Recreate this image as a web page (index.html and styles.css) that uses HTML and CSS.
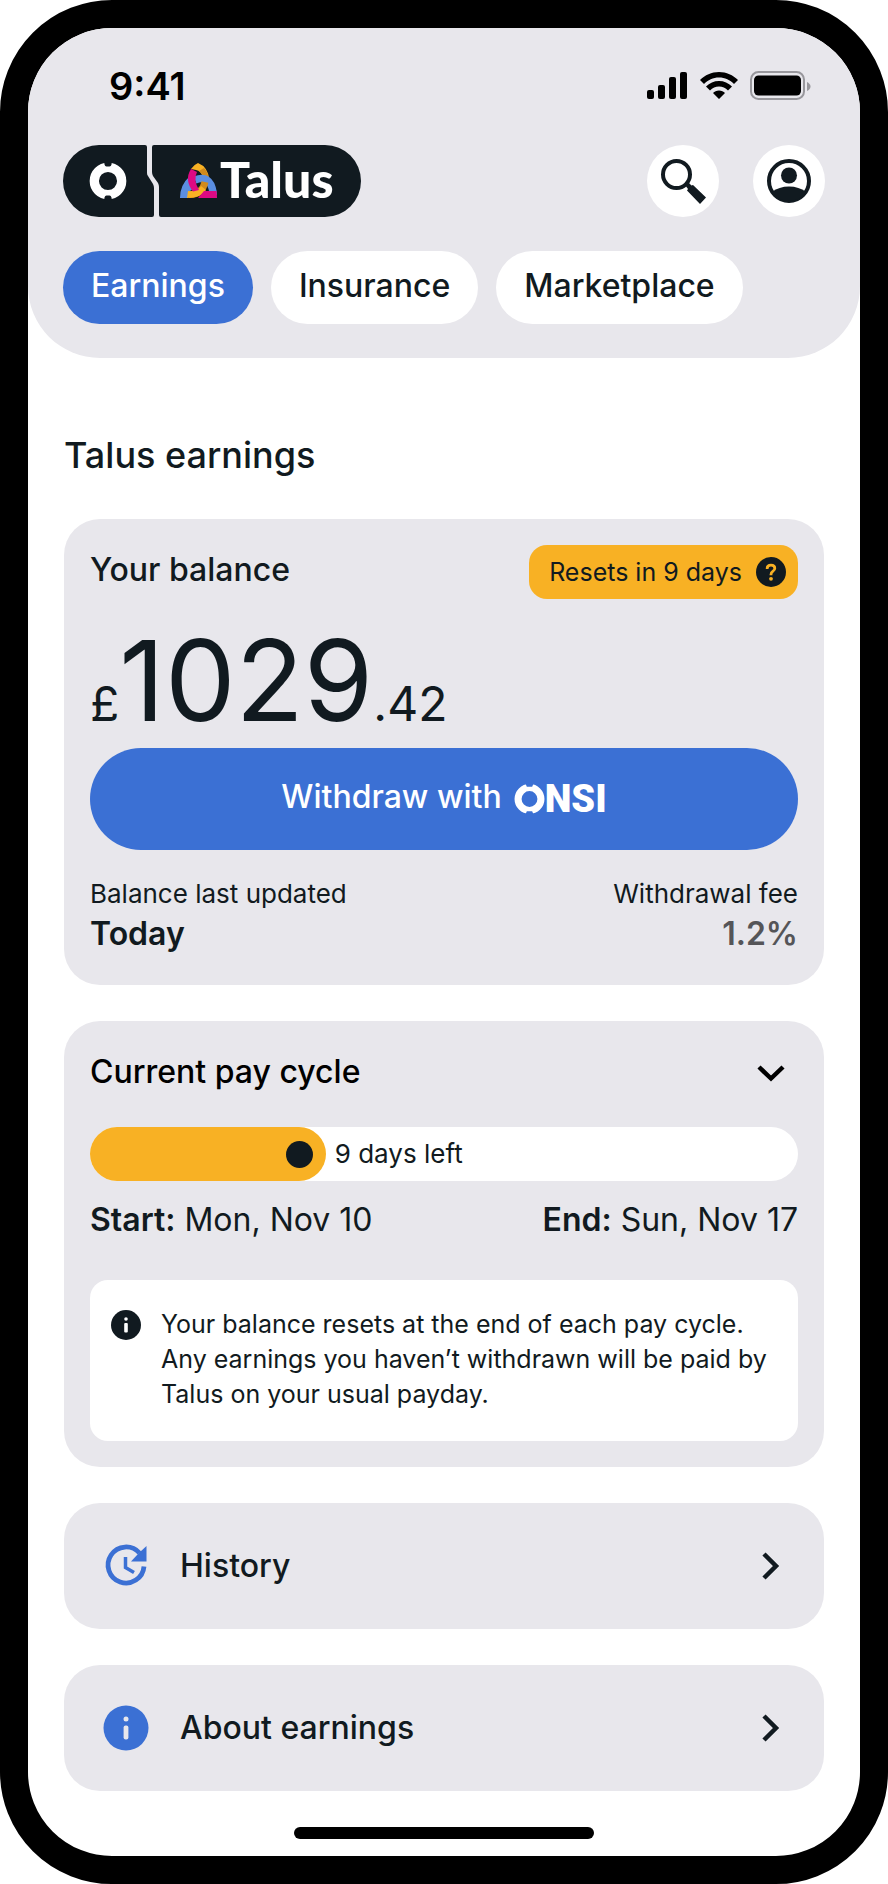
FILE: index.html
```html
<!DOCTYPE html>
<html lang="en">
<head>
<meta charset="utf-8">
<meta name="viewport" content="width=device-width, initial-scale=1">
<title>Talus earnings</title>
<link rel="stylesheet" href="styles.css">
</head>
<body>
<div class="phone">
  <header class="header">
    <div class="status">
      <time class="clock">9:41</time>
      <div class="indicators">
        <svg width="41" height="28" viewBox="0 0 41 28" aria-hidden="true"><rect x="0" y="18" width="7" height="9" rx="2"/><rect x="11" y="13" width="7" height="14" rx="2"/><rect x="22" y="5" width="7" height="22" rx="2"/><rect x="33" y="0" width="7" height="27" rx="2"/></svg>
        <svg width="38" height="28" viewBox="0 0 38 28" aria-hidden="true"><path d="M19 0C26.500 0 33 3 38 8L34 12C30 8 25 5.500 19 5.500S8 8 4 12L0 8C5 3 11.500 0 19 0ZM19 9C24 9 28.500 11 32 14.500L28 18.500C25.500 16 22.500 14.500 19 14.500S12.500 16 10 18.500L6 14.500C9.500 11 14 9 19 9ZM19 18.500C21.500 18.500 23.500 19.500 25 21L19 27L13 21C14.500 19.500 16.500 18.500 19 18.500Z"/></svg>
        <svg width="61" height="30" viewBox="0 0 61 30" aria-hidden="true"><rect x="1" y="1" width="53" height="27" rx="7.500" fill="none" stroke="#98979c" stroke-width="2"/><rect x="4" y="4.500" width="47" height="20" rx="4.500"/><path d="M57 11C59 12 60.500 13.500 60.500 15.500S59 19 57 20Z" fill="#98979c"/></svg>
      </div>
    </div>
    <div class="brand-row">
      <a class="brand" href="#" aria-label="Onsi and Talus home">
        <svg width="299" height="72" viewBox="1 0 299 72">
          <path d="M37 0H83Q85 0 85 2V28Q85 30 86 31L91 39Q92 41 92 43V70Q92 72 90 72H37A36 36 0 0 1 37 0Z" fill="#111a20"/>
          <path d="M92 0H263A36 36 0 0 1 263 72H99Q97 72 97 70V42Q97 40 96 38L91 31Q90 29 90 27V2Q90 0 92 0Z" fill="#111a20"/>
          <circle cx="46" cy="36" r="13.700" fill="none" stroke="#fff" stroke-width="9.300"/>
          <path d="M42 16H50L49.500 19.500Q49 21.500 47.500 21.500H44.500Q43 21.500 42.500 19.500ZM42 56H50L49.500 52.500Q49 50.500 47.500 50.500H44.500Q43 50.500 42.500 52.500Z" fill="#111a20"/>
          <path d="M129 24Q132 19.500 136 18Q146 22 147 34L141 32Q139 26 134 25Z" fill="#f8b124"/>
          <path d="M142 23Q146 27 147 34L141 32Q140 28 137 26Z" fill="#d08a1c"/>
          <path d="M118 53Q118 40 127 32L131 44Q126 46 126 53Z" fill="#5b8ee0"/>
          <path d="M133 35Q148 29 151 47" fill="none" stroke="#5b8ee0" stroke-width="7.500"/>
          <path d="M151 40Q155 45 155 50L147 48Z" fill="#5b8ee0"/>
          <path d="M127 49.500Q140 50 143 37" fill="none" stroke="#d08a1c" stroke-width="7"/>
          <path d="M126 46Q136 47 139 41L144 45Q139 53 125 53Z" fill="#f8b124"/>
          <path d="M136 53L142 46H154.500Q155 50 155 53Z" fill="#dd0a83"/>
          <path d="M129 24L135 27Q131 35 137 45L131 46.500Q122 35 129 24Z" fill="#dd0a83"/>
          <text class="brand-name" x="158" y="53">Talus</text>
        </svg>
      </a>
      <div class="actions">
        <button class="round" type="button" aria-label="Search">
          <svg width="46" height="46" viewBox="0 0 46 46" aria-hidden="true"><circle cx="16.500" cy="16.500" r="13.500" fill="none" stroke="#111a20" stroke-width="4"/><path d="M25 27L28 24L31.500 27.500L33 27L46 39.500L40 46L27 32.500L28 31Z" fill="#111a20"/></svg>
        </button>
        <button class="round" type="button" aria-label="Profile">
          <svg width="46" height="46" viewBox="0 0 46 46" aria-hidden="true"><circle cx="23" cy="23" r="20" fill="none" stroke="#111a20" stroke-width="4"/><circle cx="23" cy="17.500" r="8" fill="#111a20"/><path d="M6 34Q13 28.500 23 28.500T40 34A20.500 20.500 0 0 1 6 34Z" fill="#111a20"/></svg>
        </button>
      </div>
    </div>
    <nav class="tabs" aria-label="Sections">
      <a class="tab tab-active" href="#" aria-current="page">Earnings</a>
      <a class="tab" href="#">Insurance</a>
      <a class="tab" href="#">Marketplace</a>
    </nav>
  </header>

  <main class="content">
    <h1 class="page-title">Talus earnings</h1>
    <div class="cards">
      <section class="card balance">
        <div class="split">
          <h2 class="title raised">Your balance</h2>
          <button class="badge" type="button">Resets in 9 days
            <svg width="30" height="30" viewBox="0 0 30 30" aria-hidden="true"><circle cx="15" cy="15" r="15" fill="#111a20"/><path d="M11.200 12V11.300Q11.200 8.200 15 8.200T18.800 11.300Q18.800 13 17 14.200Q15 15.500 15 17.500V18.300" fill="none" stroke="#f8b124" stroke-width="2.800"/><circle cx="15" cy="21.800" r="1.900" fill="#f8b124"/></svg>
          </button>
        </div>
        <p class="amount"><span>£</span><span class="pounds">1029</span><span>.42</span></p>
        <button class="withdraw" type="button">
          <span class="raised">Withdraw with</span>
          <span class="onsi">
            <svg width="31" height="30" viewBox="0 0 29 28" role="img" aria-label="O"><circle cx="14.500" cy="14" r="10.700" fill="none" stroke="#fff" stroke-width="6.600"/><path d="M10.500 -1H18.500L17 2.500H12ZM10.500 29H18.500L17 25.500H12Z" fill="#3b70d4"/></svg><span>NSI</span>
          </span>
        </button>
        <dl class="split facts">
          <div><dt>Balance last updated</dt><dd>Today</dd></div>
          <div class="fact-end"><dt>Withdrawal fee</dt><dd class="muted">1.2%</dd></div>
        </dl>
      </section>

      <section class="card cycle">
        <div class="split">
          <h2 class="title title-black">Current pay cycle</h2>
          <button class="toggle" type="button" aria-label="Collapse pay cycle" aria-expanded="true">
            <svg width="28" height="20" viewBox="0 0 28 20" aria-hidden="true"><path d="M2 5L14 16.500L26 5" fill="none" stroke="#000" stroke-width="4.500"/></svg>
          </button>
        </div>
        <div class="track" role="progressbar" aria-valuemin="0" aria-valuemax="100" aria-valuenow="33" aria-label="Pay cycle progress">
          <div class="fill" style="width:33.3%"><span class="dot"></span></div>
          <span>9 days left</span>
        </div>
        <div class="split dates">
          <p><b>Start:</b> Mon, Nov 10</p>
          <p><b>End:</b> Sun, Nov 17</p>
        </div>
        <div class="note">
          <svg width="30" height="30" viewBox="0 0 30 30" aria-hidden="true"><circle cx="15" cy="15" r="15" fill="#111a20"/><circle cx="15" cy="9" r="1.800" fill="#fff"/><rect x="13.200" y="13" width="3.600" height="9.500" rx="1" fill="#fff"/></svg>
          <p>Your balance resets at the end of each pay cycle. Any earnings you haven’t withdrawn will be paid by Talus on your usual payday.</p>
        </div>
      </section>

      <a class="card link" href="#">
        <svg width="46" height="46" viewBox="0 0 46 46" aria-hidden="true"><path d="M36.500 10A18 18 0 1 0 41 23.500" fill="none" stroke="#3b70d4" stroke-width="4.800"/><path d="M43.500 3V18.500H28L34.500 11.500L37 9Z" fill="#3b70d4"/><path d="M22.500 14V24.500L31 29.500" fill="none" stroke="#3b70d4" stroke-width="3.500"/></svg>
        <span class="link-text">History</span>
        <svg width="18" height="28" viewBox="0 0 18 28" aria-hidden="true"><path d="M2 2L14 14L2 26" fill="none" stroke="#111a20" stroke-width="4.500"/></svg>
      </a>
      <a class="card link" href="#">
        <svg width="46" height="46" viewBox="0 0 46 46" aria-hidden="true"><circle cx="23" cy="23" r="22.500" fill="#3b70d4"/><circle cx="23" cy="14" r="2.500" fill="#e8e7ec"/><rect x="20.600" y="20.500" width="4.800" height="14" rx="2" fill="#e8e7ec"/></svg>
        <span class="link-text">About earnings</span>
        <svg width="18" height="28" viewBox="0 0 18 28" aria-hidden="true"><path d="M2 2L14 14L2 26" fill="none" stroke="#111a20" stroke-width="4.500"/></svg>
      </a>
    </div>
  </main>
  <div class="home-bar"></div>
</div>
</body>
</html>
```
FILE: styles.css
```css
* { box-sizing: border-box; }
body, h1, h2, p, dl, dd { margin: 0; }
body {
  background: #fff;
  color: #111a20;
  font-family: Inter, "Liberation Sans", sans-serif;
  font-size: 26px;
  line-height: 32px;
}
button {
  border: 0;
  padding: 0;
  background: none;
  color: inherit;
  font: inherit;
  cursor: pointer;
}
a { color: inherit; text-decoration: none; }
svg { display: block; flex: none; }

.phone {
  overflow: hidden;
  padding-bottom: 17px;
  border: 28px solid #000;
  border-radius: 112px;
  background: #fff;
}

.header {
  padding: 36px 35px 34px;
  border-radius: 0 0 72px 72px;
  background: #e8e7ec;
}
.status {
  display: flex;
  align-items: center;
  justify-content: space-between;
  padding: 0 14px 0 46px;
}
.clock {
  color: #000;
  font-size: 38px;
  font-weight: 600;
  line-height: 44px;
}
.indicators { display: flex; align-items: center; gap: 12px; }
.brand-row {
  display: flex;
  align-items: center;
  justify-content: space-between;
  margin-top: 37px;
}
.brand-name {
  fill: #fff;
  font-family: Lato, sans-serif;
  font-size: 50px;
  font-weight: 900;
}
.actions { display: flex; gap: 34px; }
.round {
  display: grid;
  place-items: center;
  width: 72px;
  height: 72px;
  border-radius: 50%;
  background: #fff;
}
.tabs { display: flex; gap: 18px; margin-top: 34px; }
.tab {
  padding: 15px 28px 18px;
  border-radius: 37px;
  background: #fff;
  font-size: 32px;
  font-weight: 500;
  line-height: 40px;
}
.tab-active { background: #3b70d4; color: #fff; }

.content { padding: 75px 36px 36px; }
.page-title {
  margin-bottom: 42px;
  font-size: 36px;
  font-weight: 500;
  line-height: 44px;
}
.cards { display: flex; flex-direction: column; gap: 36px; }
.card { border-radius: 36px; background: #e8e7ec; }
.balance { padding: 26px 26px 31px; }
.split { display: flex; align-items: center; justify-content: space-between; }
.title { font-size: 32px; font-weight: 500; line-height: 40px; }
.title-black { color: #000; }
.raised { padding-bottom: 4px; }
.badge {
  display: flex;
  align-items: center;
  gap: 14px;
  padding: 11px 12px 11px 20px;
  border-radius: 18px;
  background: #f8b124;
  font-size: 25px;
}
.amount {
  display: flex;
  align-items: baseline;
  margin: 25px 0 12px;
  font-size: 48px;
  line-height: 48px;
}
.pounds { font-size: 112px; line-height: 112px; }
.withdraw {
  display: flex;
  align-items: center;
  justify-content: center;
  gap: 12px;
  width: 100%;
  padding: 31px;
  border-radius: 51px;
  background: #3b70d4;
  color: #fff;
  font-size: 32px;
  font-weight: 500;
  line-height: 36px;
}
.onsi {
  display: flex;
  align-items: center;
  font-family: Roboto, sans-serif;
  font-size: 38px;
  font-weight: 900;
}
.facts { margin-top: 28px; }
.facts dd { margin-top: 4px; font-size: 32px; font-weight: 600; line-height: 40px; }
.fact-end { text-align: right; }
.facts .muted { color: #555558; }

.cycle { padding: 31px 26px 26px; }
.toggle { padding: 10px 13px; }
.track {
  display: flex;
  align-items: center;
  gap: 9px;
  margin-top: 35px;
  border-radius: 27px;
  background: #fff;
}
.fill {
  display: flex;
  justify-content: flex-end;
  padding: 14px 13px 13px;
  border-radius: 27px;
  background: #f8b124;
}
.dot { width: 27px; height: 27px; border-radius: 50%; background: #111a20; }
.dates { margin-top: 19px; font-size: 32px; line-height: 40px; }
.dates b { font-weight: 600; }
.note {
  display: flex;
  gap: 20px;
  margin-top: 40px;
  padding: 27px 16px 29px 21px;
  border-radius: 18px;
  background: #fff;
  font-size: 25px;
  line-height: 35px;
}
.note svg { margin-top: 3px; }

.link {
  display: flex;
  align-items: center;
  gap: 31px;
  padding: 40px 44px 40px 39px;
}
.link-text { flex: 1; font-size: 32px; font-weight: 500; line-height: 44px; }

.home-bar {
  width: 36%;
  height: 12px;
  margin: 0 auto;
  border-radius: 6px;
  background: #000;
}
```
